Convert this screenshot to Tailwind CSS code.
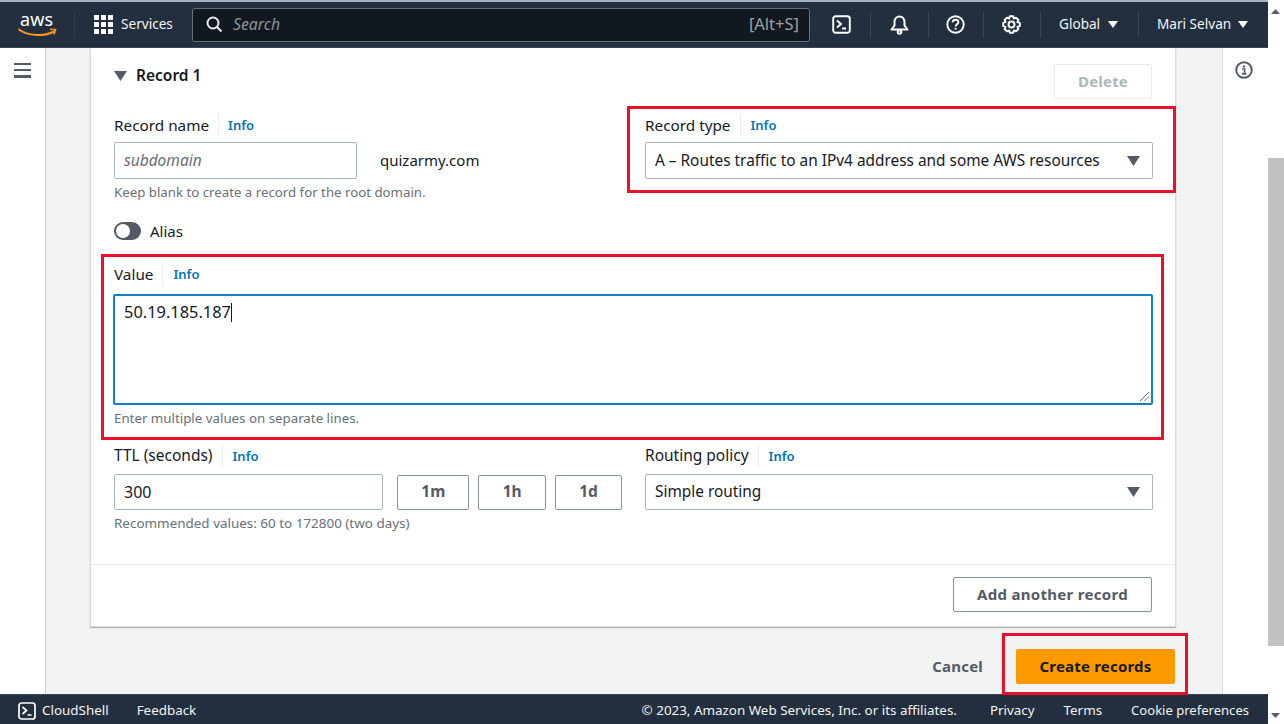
<!DOCTYPE html>
<html lang="en">
<head>
<meta charset="utf-8">
<script src="https://cdn.jsdelivr.net/npm/@tailwindcss/browser@4"></script>
<title>Create record</title>
</head>
<body class="w-[1284px] h-[724px] overflow-hidden bg-white font-['Noto_Sans','Open_Sans',sans-serif] text-[#16191f]">
<div class="flex h-[724px]">
  <div class="w-[1268px] flex flex-col h-full">
    <header class="h-[48px] shrink-0 bg-[#232f3e] border-t-2 border-[#aab2bb] border-b border-b-[#3b4654] flex items-center text-white text-[13.6px]">
      <div class="w-[74px] flex justify-center pl-[2px] shrink-0">
        <svg width="44" height="44" viewBox="0 0 44 44" fill="none">
          <text x="4" y="23" fill="#fff" font-size="18" font-family="Noto Sans" textLength="33">aws</text>
          <path d="M3 26.5 C12 33 28 34 38 28.5" stroke="#f7981d" stroke-width="2" stroke-linecap="round"/>
          <path d="M34 26.5 L39.5 26.5 L38 31.5" stroke="#f7981d" stroke-width="1.6" fill="none"/>
        </svg>
      </div>
      <div class="w-px h-[26px] bg-[#2f3b4a]"></div>
      <div class="flex items-center ml-[19px] w-[97px] shrink-0">
        <div class="grid grid-cols-3 gap-[2.5px] w-[19px] shrink-0">
          <i class="w-[4.5px] h-[4.5px] bg-white block"></i><i class="w-[4.5px] h-[4.5px] bg-white block"></i><i class="w-[4.5px] h-[4.5px] bg-white block"></i>
          <i class="w-[4.5px] h-[4.5px] bg-white block"></i><i class="w-[4.5px] h-[4.5px] bg-white block"></i><i class="w-[4.5px] h-[4.5px] bg-white block"></i>
          <i class="w-[4.5px] h-[4.5px] bg-white block"></i><i class="w-[4.5px] h-[4.5px] bg-white block"></i><i class="w-[4.5px] h-[4.5px] bg-white block"></i>
        </div>
        <span class="ml-[8px] text-[#f2f3f3]">Services</span>
      </div>
      <div class="w-[618px] h-[34px] shrink-0 ml-[1px] rounded-[3px] border border-[#687078] bg-[#12181f] flex items-center pl-[13px] pr-[10px]">
        <svg width="17" height="17" viewBox="0 0 17 17" fill="none" stroke="#e9ebed" stroke-width="2"><circle cx="7" cy="7" r="5.5"/><path d="M11 11 L15.5 15.5"/></svg>
        <span class="ml-[10px] italic text-[15.8px] text-[#8d9499]">Search</span>
        <span class="ml-auto text-[16.5px] text-[#9aa1a6]">[Alt+S]</span>
      </div>
      <div class="w-[60px] flex justify-center pl-[2px] shrink-0">
        <svg width="19" height="19" viewBox="0 0 19 19" fill="none" stroke="#fff" stroke-width="1.9"><rect x="1.2" y="1.2" width="16.6" height="16.6" rx="2.5"/><path d="M5 5.5 L9 9 L5 12.5 M10 13.5 H14"/></svg>
      </div>
      <div class="w-px h-[26px] bg-[#3b4654]"></div>
      <div class="w-[57px] flex justify-center pr-[1px] shrink-0">
        <svg width="19" height="20" viewBox="0 0 19 20" fill="none" stroke="#fff" stroke-width="2"><path d="M1.5 14.5 L4.5 10.5 V7 C4.5 4 6.5 1.5 9.5 1.5 C12.5 1.5 14.5 4 14.5 7 V10.5 L17.5 14.5 Z" stroke-linejoin="round"/><circle cx="9.5" cy="17" r="1.8"/></svg>
      </div>
      <div class="w-px h-[26px] bg-[#3b4654]"></div>
      <div class="w-[54px] flex justify-center pr-[2px] shrink-0">
        <svg width="19" height="19" viewBox="0 0 19 19" fill="none" stroke="#fff" stroke-width="1.9"><circle cx="9.5" cy="9.5" r="8.2"/><path d="M6.7 7.3 C6.8 5.5 8 4.7 9.6 4.7 C11.2 4.7 12.4 5.7 12.4 7.1 C12.4 9.1 9.6 9.2 9.6 11.4"/><path d="M9.6 12.8 V14.6"/></svg>
      </div>
      <div class="w-px h-[26px] bg-[#3b4654]"></div>
      <div class="w-[56px] flex justify-center pr-[2px] shrink-0">
        <svg width="19" height="19" viewBox="0 0 19 19" fill="none" stroke="#fff" stroke-width="1.9"><path d="M7.8 1.2 H11.2 L11.8 3.6 L14 2.6 L16.4 5 L15.4 7.2 L17.8 7.8 V11.2 L15.4 11.8 L16.4 14 L14 16.4 L11.8 15.4 L11.2 17.8 H7.8 L7.2 15.4 L5 16.4 L2.6 14 L3.6 11.8 L1.2 11.2 V7.8 L3.6 7.2 L2.6 5 L5 2.6 L7.2 3.6 Z" stroke-linejoin="round"/><circle cx="9.5" cy="9.5" r="3"/></svg>
      </div>
      <div class="w-px h-[26px] bg-[#3b4654]"></div>
      <div class="w-[97px] flex items-center pl-[18px] gap-[8px] shrink-0 text-[#f2f3f3]">
        <span>Global</span>
        <svg width="10" height="7" viewBox="0 0 10 7" fill="#fff"><path d="M0 0 H10 L5 7 Z"/></svg>
      </div>
      <div class="w-px h-[26px] bg-[#3b4654]"></div>
      <div class="flex items-center gap-[7px] ml-[18px] text-[#f2f3f3]">
        <span>Mari Selvan</span>
        <svg width="10" height="7" viewBox="0 0 10 7" fill="#fff"><path d="M0 0 H10 L5 7 Z"/></svg>
      </div>
    </header>

    <div class="flex flex-1 min-h-0">
      <aside class="w-[46px] shrink-0 bg-white border-r border-[#c9cccc] pt-[15px] pl-[14px]">
        <div class="w-[17px] flex flex-col gap-[4px]">
          <i class="block h-[2.2px] bg-[#545b64]"></i><i class="block h-[2.2px] bg-[#545b64]"></i><i class="block h-[2.2px] bg-[#545b64]"></i>
        </div>
      </aside>

      <main class="w-[1177px] shrink-0 bg-[#f2f3f3] border-r border-[#d5d8d8] pl-[44px] pr-[46px]">
        <section class="h-[579px] bg-white border border-t-0 border-[#d5dbdb] shadow-[0_1px_1px_rgba(0,0,0,0.25)] flex flex-col">
          <div class="flex justify-between pl-[23px] pr-[23px] pt-[16px] h-[68px]">
            <div class="flex items-center h-[24px] gap-[9px]">
              <svg width="13" height="10" viewBox="0 0 13 10" fill="#545b64"><path d="M0 0 H13 L6.5 10 Z"/></svg>
              <span class="text-[15.5px] font-semibold text-[#16191f]">Record 1</span>
            </div>
            <div class="w-[98px] h-[35px] border border-[#eaeded] rounded-[2px] flex items-center justify-center text-[15px] font-bold tracking-[0.2px] text-[#aab7b8]">Delete</div>
          </div>

          <div class="grid grid-cols-[508px_508px] gap-x-[23px] pl-[23px]">
            <div>
              <div class="flex items-center h-[26px] pb-[8px]">
                <span class="text-[15.3px] text-[#16191f] pr-[9px] border-r border-[#eaeded]">Record name</span>
                <span class="ml-[9px] mt-[2px] text-[13px] font-semibold text-[#0073bb]">Info</span>
              </div>
              <div class="flex items-center">
                <div class="w-[243px] h-[37px] border border-[#aab7b8] rounded-[2px] flex items-center pl-[9px] italic text-[15.5px] text-[#687078]">subdomain</div>
                <span class="ml-[23px] text-[15px] text-[#16191f]">quizarmy.com</span>
              </div>
              <p class="mt-[4px] text-[13.25px] leading-[18px] text-[#687078]">Keep blank to create a record for the root domain.</p>
            </div>
            <div>
              <div class="flex items-center h-[26px] pb-[8px]">
                <span class="text-[15.3px] text-[#16191f] pr-[9px] border-r border-[#eaeded]">Record type</span>
                <span class="ml-[10px] mt-[2px] text-[13px] font-semibold text-[#0073bb]">Info</span>
              </div>
              <div class="w-[508px] h-[37px] border border-[#aab7b8] rounded-[2px] flex items-center pl-[9px] pr-[12px] text-[15.4px] text-[#16191f] justify-between">
                <span>A – Routes traffic to an IPv4 address and some AWS resources</span>
                <svg width="13" height="10" viewBox="0 0 13 10" fill="#545b64"><path d="M0 0 H13 L6.5 10 Z"/></svg>
              </div>
            </div>
          </div>

          <div class="flex items-center gap-[9px] pl-[23px] mt-[17px] h-[26px]">
            <div class="relative w-[27px] h-[18px] rounded-full bg-[#545b64]">
              <i class="absolute left-[2px] top-[2px] w-[14px] h-[14px] rounded-full bg-white block"></i>
            </div>
            <span class="text-[15px] text-[#16191f]">Alias</span>
          </div>

          <div class="pl-[23px] pr-[23px] mt-[17px]">
            <div class="flex items-center h-[26px] mb-[7px]">
              <span class="text-[15.3px] text-[#16191f] pr-[9px] border-r border-[#eaeded]">Value</span>
              <span class="ml-[10px] mt-[2px] text-[13px] font-semibold text-[#0073bb]">Info</span>
            </div>
            <div class="relative h-[111px] border-2 border-[#0f83c4] rounded-[2px] -ml-px -mr-px pl-[9px] pt-[5px] text-[16.4px] leading-[22px] text-[#16191f] flex items-start">
              <span>50.19.185.187</span><i class="block w-[1.5px] h-[19px] mt-[2px] bg-[#16191f]"></i>
              <svg class="absolute right-[1px] bottom-[1px]" width="11" height="11" viewBox="0 0 11 11" stroke="#687078" stroke-width="1" fill="none"><path d="M1 10 L10 1 M5.5 10 L10 5.5"/></svg>
            </div>
            <p class="mt-[4px] text-[13.3px] leading-[18px] text-[#687078]">Enter multiple values on separate lines.</p>
          </div>

          <div class="grid grid-cols-[508px_508px] gap-x-[23px] pl-[23px] mt-[17px]">
            <div>
              <div class="flex items-center h-[26px] pb-[2px]">
                <span class="text-[15.5px] text-[#16191f] pr-[9px] border-r border-[#eaeded]">TTL (seconds)</span>
                <span class="ml-[10px] mt-[2px] text-[13px] font-semibold text-[#0073bb]">Info</span>
              </div>
              <div class="flex items-center mt-[4px] text-[15px]">
                <div class="w-[270px] h-[36px] border border-[#aab7b8] rounded-[2px] flex items-center pl-[9px] text-[16px] text-[#16191f]">300</div>
                <div class="ml-[14px] w-[72px] h-[35px] border border-[#879596] rounded-[2px] flex items-center justify-center font-bold text-[15.5px] text-[#545b64]">1m</div>
                <div class="ml-[9px] w-[68px] h-[35px] border border-[#879596] rounded-[2px] flex items-center justify-center font-bold text-[15.5px] text-[#545b64]">1h</div>
                <div class="ml-[9px] w-[67px] h-[35px] border border-[#879596] rounded-[2px] flex items-center justify-center font-bold text-[15.5px] text-[#545b64]">1d</div>
              </div>
              <p class="mt-[4px] text-[13.45px] leading-[18px] text-[#687078]">Recommended values: 60 to 172800 (two days)</p>
            </div>
            <div>
              <div class="flex items-center h-[26px] pb-[2px]">
                <span class="text-[15.5px] text-[#16191f] pr-[9px] border-r border-[#eaeded]">Routing policy</span>
                <span class="ml-[10px] mt-[2px] text-[13px] font-semibold text-[#0073bb]">Info</span>
              </div>
              <div class="mt-[4px] w-[508px] h-[36px] border border-[#aab7b8] rounded-[2px] flex items-center pl-[9px] pr-[12px] text-[15.4px] text-[#16191f] justify-between">
                <span>Simple routing</span>
                <svg width="13" height="10" viewBox="0 0 13 10" fill="#545b64"><path d="M0 0 H13 L6.5 10 Z"/></svg>
              </div>
            </div>
          </div>

          <div class="mt-auto border-t border-[#eaeded] h-[62px] flex items-start justify-end pr-[23px] pt-[12px]">
            <div class="w-[199px] h-[35px] border border-[#879596] rounded-[2px] flex items-center justify-center text-[15px] font-bold tracking-[0.3px] text-[#545b64]">Add another record</div>
          </div>
        </section>

        <div class="flex items-center justify-end mt-[22px] mr-[1px]">
          <span class="text-[15px] font-bold text-[#545b64] tracking-[0.2px]">Cancel</span>
          <div class="ml-[33px] w-[159px] h-[35px] bg-[#ff9900] rounded-[2px] flex items-center justify-center text-[15px] font-bold tracking-[0.2px] text-[#16191f]">Create records</div>
        </div>
      </main>

      <aside class="flex-1 bg-white pt-[13px] pr-[4px] flex justify-center">
        <svg width="18" height="18" viewBox="0 0 18 18" fill="none"><circle cx="9" cy="9" r="7.8" stroke="#545b64" stroke-width="1.9"/><path d="M7.2 8 H9.6 V12.6 M7 12.8 H11.4" stroke="#545b64" stroke-width="1.7"/><circle cx="9" cy="5.4" r="1.2" fill="#545b64"/></svg>
      </aside>
    </div>

    <footer class="h-[30px] shrink-0 bg-[#232f3e] text-[13.4px] text-[#f2f3f3] flex items-center pt-[2px] border-t border-[#3b4654]">
      <svg class="ml-[18px]" width="18" height="18" viewBox="0 0 18 18" fill="none" stroke="#fff" stroke-width="1.7"><rect x="1" y="1" width="16" height="16" rx="2.5"/><path d="M4.5 5 L8.5 8.5 L4.5 12 M9.5 13 H13.5"/></svg>
      <span class="ml-[6px]">CloudShell</span>
      <span class="ml-[28px]">Feedback</span>
      <span class="ml-auto">© 2023, Amazon Web Services, Inc. or its affiliates.</span>
      <span class="ml-[33px]">Privacy</span>
      <span class="ml-[29px]">Terms</span>
      <span class="ml-[29px] mr-[19px] text-[13.05px]">Cookie preferences</span>
    </footer>
  </div>

  <div class="relative w-[16px] bg-white">
    <svg class="absolute left-[3px] top-[9px]" width="9" height="5" viewBox="0 0 9 5" fill="#545b64"><path d="M0 5 H9 L4.5 0 Z"/></svg>
    <div class="absolute left-0 right-0 top-[158px] h-[488px] bg-[#c1c1c1]"></div>
    <svg class="absolute left-[3px] bottom-[6px]" width="9" height="5" viewBox="0 0 9 5" fill="#545b64"><path d="M0 0 H9 L4.5 5 Z"/></svg>
  </div>
</div>

<!-- annotation rectangles drawn over the screenshot -->
<div class="absolute left-[627px] top-[106px] w-[549px] h-[87px] border-[3px] border-[#e8112d]"></div>
<div class="absolute left-[101px] top-[254px] w-[1063px] h-[186px] border-[3px] border-[#e8112d]"></div>
<div class="absolute left-[1002px] top-[633px] w-[186px] h-[62px] border-[3px] border-[#e8112d]"></div>
</body>
</html>
